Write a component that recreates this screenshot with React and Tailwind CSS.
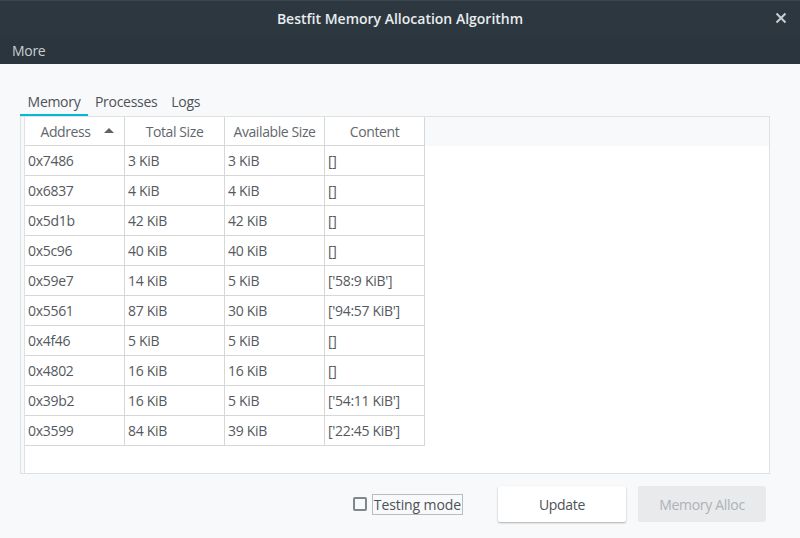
import React, { useState } from "react";

const rows = [
  ["0x7486", "3 KiB", "3 KiB", "[]"],
  ["0x6837", "4 KiB", "4 KiB", "[]"],
  ["0x5d1b", "42 KiB", "42 KiB", "[]"],
  ["0x5c96", "40 KiB", "40 KiB", "[]"],
  ["0x59e7", "14 KiB", "5 KiB", "['58:9 KiB']"],
  ["0x5561", "87 KiB", "30 KiB", "['94:57 KiB']"],
  ["0x4f46", "5 KiB", "5 KiB", "[]"],
  ["0x4802", "16 KiB", "16 KiB", "[]"],
  ["0x39b2", "16 KiB", "5 KiB", "['54:11 KiB']"],
  ["0x3599", "84 KiB", "39 KiB", "['22:45 KiB']"],
];

const headers = ["Address", "Total Size", "Available Size", "Content"];

const App = () => {
  const [tab, setTab] = useState("Memory");
  const [testing, setTesting] = useState(false);

  return (
    <div
      className="w-[800px] h-[538px] flex flex-col bg-[#f8f9fb] overflow-hidden"
      style={{ fontFamily: '"Open Sans", "Noto Sans", sans-serif' }}
    >
      {/* title bar */}
      <div className="h-[37px] bg-[#2c3740] border-t border-[#3c474f] flex items-center relative">
        <div className="flex-1 text-center text-[14px] font-semibold text-[#e9ecee] pb-[1px]">
          Bestfit Memory Allocation Algorithm
        </div>
        <button className="absolute right-[12px] top-[10px] w-[14px] h-[14px] flex items-center justify-center text-[#c9ced2]">
          <svg width="12" height="12" viewBox="0 0 12 12">
            <path d="M1.5 1.5 L10.5 10.5 M10.5 1.5 L1.5 10.5" stroke="currentColor" strokeWidth="2" />
          </svg>
        </button>
      </div>

      {/* menu bar */}
      <div className="h-[27px] bg-[#2b353d] flex items-center px-[12px]">
        <span className="text-[14px] text-[#c9ced2] tracking-[-0.3px]">More</span>
      </div>

      {/* content */}
      <div className="flex-1 flex flex-col pl-[20px] pr-[30px] pt-[24px]">
        <div className="flex h-[28px] text-[14px] text-[#4d5257] tracking-[-0.3px]">
          {["Memory", "Processes", "Logs"].map((t) => (
            <button
              key={t}
              onClick={() => setTab(t)}
              className={
                "h-full flex items-center border-b-2 " +
                (t === "Memory" ? "w-[68px] justify-center " : "px-[7px] ") +
                (tab === t ? "border-[#00bcd4]" : "border-transparent")
              }
            >
              {t}
            </button>
          ))}
        </div>

        <div className="h-[358px] border border-[#dfe2e5] bg-white flex">
          <div className="w-[4px] bg-[#f8f9fb] border-r border-[#dfe2e5]" />
          <div className="flex-1 flex flex-col">
            {/* header */}
            <div className="flex h-[29px] bg-[#f8f9fb]">
              {headers.map((h, i) => (
                <div
                  key={h}
                  className="w-[100px] h-full bg-white border-r border-b border-[#d5d7d9] flex items-center justify-center text-[14px] text-[#63676c] tracking-[-0.4px] relative"
                >
                  <span className={i === 0 ? "pr-[18px]" : ""}>{h}</span>
                  {i === 0 && (
                    <svg className="absolute right-[10px] top-[11px]" width="10" height="5" viewBox="0 0 10 5">
                      <path d="M0 5 L5 0 L10 5 Z" fill="#5f6368" />
                    </svg>
                  )}
                </div>
              ))}
            </div>
            {rows.map((r) => (
              <div key={r[0]} className="flex h-[30px]">
                {r.map((c, i) => (
                  <div
                    key={i}
                    className="w-[100px] h-full border-r border-b border-[#d5d7d9] flex items-center pl-[3px] text-[14px] text-[#55595e] tracking-[-0.3px]"
                  >
                    {c}
                  </div>
                ))}
              </div>
            ))}
          </div>
        </div>

        {/* bottom */}
        <div className="flex items-center justify-end gap-[12px] mt-[12px] pr-[4px] h-[36px]">
          <label className="flex items-center gap-[5px] mr-[23px] cursor-pointer">
            <input
              type="checkbox"
              checked={testing}
              onChange={() => setTesting(!testing)}
              className="appearance-none w-[14px] h-[14px] border-2 border-[#80868b] rounded-[2px] checked:bg-[#00bcd4] checked:border-[#00bcd4]"
            />
            <span className="text-[14px] text-[#4d5257] tracking-[-0.1px] border border-[#b9bdc1] px-[1px] leading-[19px]">
              Testing mode
            </span>
          </label>
          <button className="w-[128px] h-[36px] bg-white rounded-[2px] shadow-[0_1px_2px_rgba(0,0,0,0.3)] text-[14px] text-[#4d5257] tracking-[-0.3px]">
            Update
          </button>
          <button
            disabled
            className="w-[128px] h-[36px] bg-[#e8eaec] rounded-[2px] text-[14px] text-[#aeb2b6] tracking-[-0.3px]"
          >
            Memory Alloc
          </button>
        </div>
      </div>
    </div>
  );
};

export default App;
